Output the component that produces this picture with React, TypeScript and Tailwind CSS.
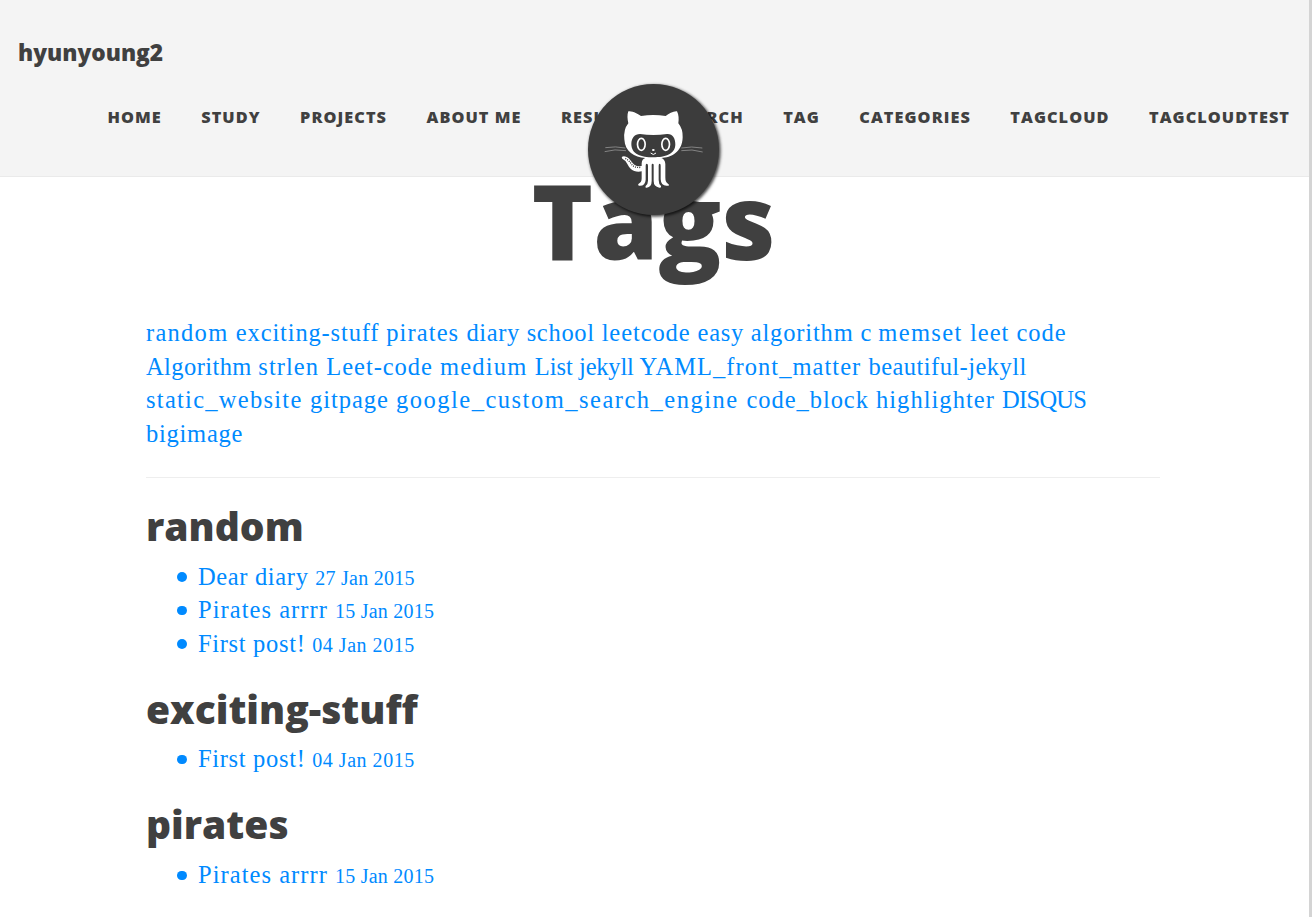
const nav = ["Home", "Study", "Projects", "About Me", "Resume", "Search", "Tag", "Categories", "TagCloud", "TagCloudTest"];

const tagLines = [
  [
    { name: "random", cls: "tracking-[1.27px]" },
    { name: "exciting-stuff", cls: "tracking-[0.85px]" },
    { name: "pirates", cls: "tracking-[1.09px]" },
    { name: "diary", cls: "tracking-[0.62px]" },
    { name: "school", cls: "tracking-[0.7px]" },
    { name: "leetcode", cls: "tracking-[0.91px]" },
    { name: "easy", cls: "tracking-[0.7px]" },
    { name: "algorithm", cls: "tracking-[0.84px]" },
    { name: "c", cls: "tracking-[0.4px]" },
    { name: "memset", cls: "tracking-[1.34px]" },
    { name: "leet code", cls: "tracking-[0.98px]" },
  ],
  [
    { name: "Algorithm", cls: "tracking-[0.41px]" },
    { name: "strlen", cls: "tracking-[1.06px]" },
    { name: "Leet-code", cls: "tracking-[0.96px]" },
    { name: "medium", cls: "tracking-[1.19px]" },
    { name: "List", cls: "tracking-[0.02px]" },
    { name: "jekyll", cls: "tracking-[-0.21px]" },
    { name: "YAML_front_matter", cls: "tracking-[1.04px]" },
    { name: "beautiful-jekyll", cls: "tracking-[0.45px]" },
  ],
  [
    { name: "static_website", cls: "tracking-[1.27px]" },
    { name: "gitpage", cls: "tracking-[0.96px]" },
    { name: "google_custom_search_engine", cls: "tracking-[1.51px]" },
    { name: "code_block", cls: "tracking-[0.96px]" },
    { name: "highlighter", cls: "tracking-[1.03px]" },
    { name: "DISQUS", cls: "tracking-[-0.7px]" },
  ],
  [{ name: "bigimage", cls: "tracking-[0.75px]" }],
];

const first = { title: "First post!", date: "04 Jan 2015", cls: "tracking-[0.68px]", dateCls: "tracking-[0.52px]" };
const pirates = { title: "Pirates arrrr", date: "15 Jan 2015", cls: "tracking-[1.05px]", dateCls: "tracking-[0.22px]" };
const diary = { title: "Dear diary", date: "27 Jan 2015", cls: "tracking-[0.65px]", dateCls: "tracking-[0.25px]" };

const sections = [
  { name: "random", posts: [diary, pirates, first] },
  { name: "exciting-stuff", posts: [first] },
  { name: "pirates", posts: [pirates] },
];

function Octocat() {
  return (
    <svg viewBox="54 42 393 393" className="block size-full" fill="none">
      <g stroke="#a8a8a8" strokeWidth="2">
        <path d="M106 233Q136 228 166 234M104 245Q134 236 168 242M334 234Q364 228 397 234M334 242Q366 236 398 246" />
      </g>
      <path fill="#fff" d="M175 124C188 122 204 132 213 138Q250 132 287 138C297 130 310 123 321 124Q328 138 325 160Q339 177 338 202C337 247 303 263 274 264Q285 268 286 282V322Q286 338 294 341Q299 344 296 347Q273 351 272 328V287Q272 281 269 281Q266 281 266 287V330Q266 342 273 348Q275 354 268 353Q251 350 251 333V285Q251 281 248 281Q245 281 245 285V333Q245 351 230 353Q224 354 227 348Q234 342 234 332V287Q234 281 230 281Q227 281 227 287V329Q226 348 208 347Q202 346 206 341Q215 338 215 325V304C190 309 178 294 172 282Q166 270 157 266Q152 260 162 259C180 262 182 275 193 284Q202 290 215 288V280Q216 267 226 264C193 262 165 246 163 208Q160 178 175 160Q170 138 175 124Z" />
      <path d="M166 265Q179 273 187 286Q197 294 214 292" stroke="#3c3c3c" strokeWidth="4" strokeDasharray="3 3.5" />
      <path fill="#3c3c3c" d="M210 192Q250 198 291 192C308 191 316 204 316 223C316 253 285 262 250 262C214 262 184 253 184 222C184 204 194 192 210 192Z" />
      <g fill="#3c3c3c" stroke="#fff" strokeWidth="5">
        <ellipse cx="214" cy="223" rx="11.5" ry="18" />
        <ellipse cx="287" cy="223" rx="11.5" ry="18" />
      </g>
      <ellipse cx="250" cy="240" rx="4" ry="3" fill="#fff" />
      <path d="M242 249Q250 258 258 249" stroke="#fff" strokeWidth="3" />
    </svg>
  );
}

export default function App() {
  return (
    <div className="flex h-[917px] overflow-hidden bg-white text-[#404040]">
      <div className="min-w-0 flex-1">
        <header className="relative h-[177px] border-b border-[#eaeaea] bg-[#f4f4f4] font-['Open_Sans',sans-serif]">
          <a className="block pl-[18px] pt-[37px] text-[22.7px] leading-8 font-extrabold">hyunyoung2</a>
          <nav className="flex justify-end gap-[39.5px] whitespace-nowrap pr-[19px] pt-9 text-[16.3px] leading-6 font-extrabold tracking-[1.05px] uppercase">
            {nav.map((item) => <a key={item}>{item}</a>)}
          </nav>
          <div className="absolute left-[588px] top-[84px] z-10 size-[131px] overflow-hidden rounded-full bg-[#3c3c3c] shadow-[1.2px_1.2px_3px_0.5px_rgba(0,0,0,0.7)]">
            <Octocat />
          </div>
        </header>
        <main className="ml-[146px] mr-[149px] font-['Liberation_Serif',serif] text-[24.5px] leading-[33.6px] text-[#008aff]">
          <h1 className="h-[139px] pl-px text-center font-['Open_Sans',sans-serif] text-[104.5px] leading-[86px] font-extrabold text-[#404040]">Tags</h1>
          <div>
            {tagLines.map((line) => (
              <div key={line[0].name} className="whitespace-nowrap">
                {line.map((t) => <a key={t.name} className={t.cls}>{t.name + " "}</a>)}
              </div>
            ))}
          </div>
          <hr className="mt-[27px] border-[#eeeeee]" />
          <div className="-mt-px">
            {sections.map((s) => (
              <section key={s.name} className="pt-[26.6px]">
                <h2 className="font-['Open_Sans',sans-serif] text-[39px] leading-[44px] font-extrabold text-[#404040]">{s.name}</h2>
                <ul className="mt-[11.6px]">
                  {s.posts.map((p) => (
                    <li key={p.title} className="flex h-[33.5px] items-center whitespace-nowrap pl-[31.4px]">
                      <span className="mr-[11.2px] mt-[1.4px] size-[9.4px] rounded-full bg-[#008aff]" />
                      <a className={p.cls}>{p.title + " "}<small className={`text-[20px] leading-none ${p.dateCls}`}>{p.date}</small></a>
                    </li>
                  ))}
                </ul>
              </section>
            ))}
          </div>
        </main>
      </div>
      <div className="w-[3px] bg-[#d4d4d4]" />
    </div>
  );
}
